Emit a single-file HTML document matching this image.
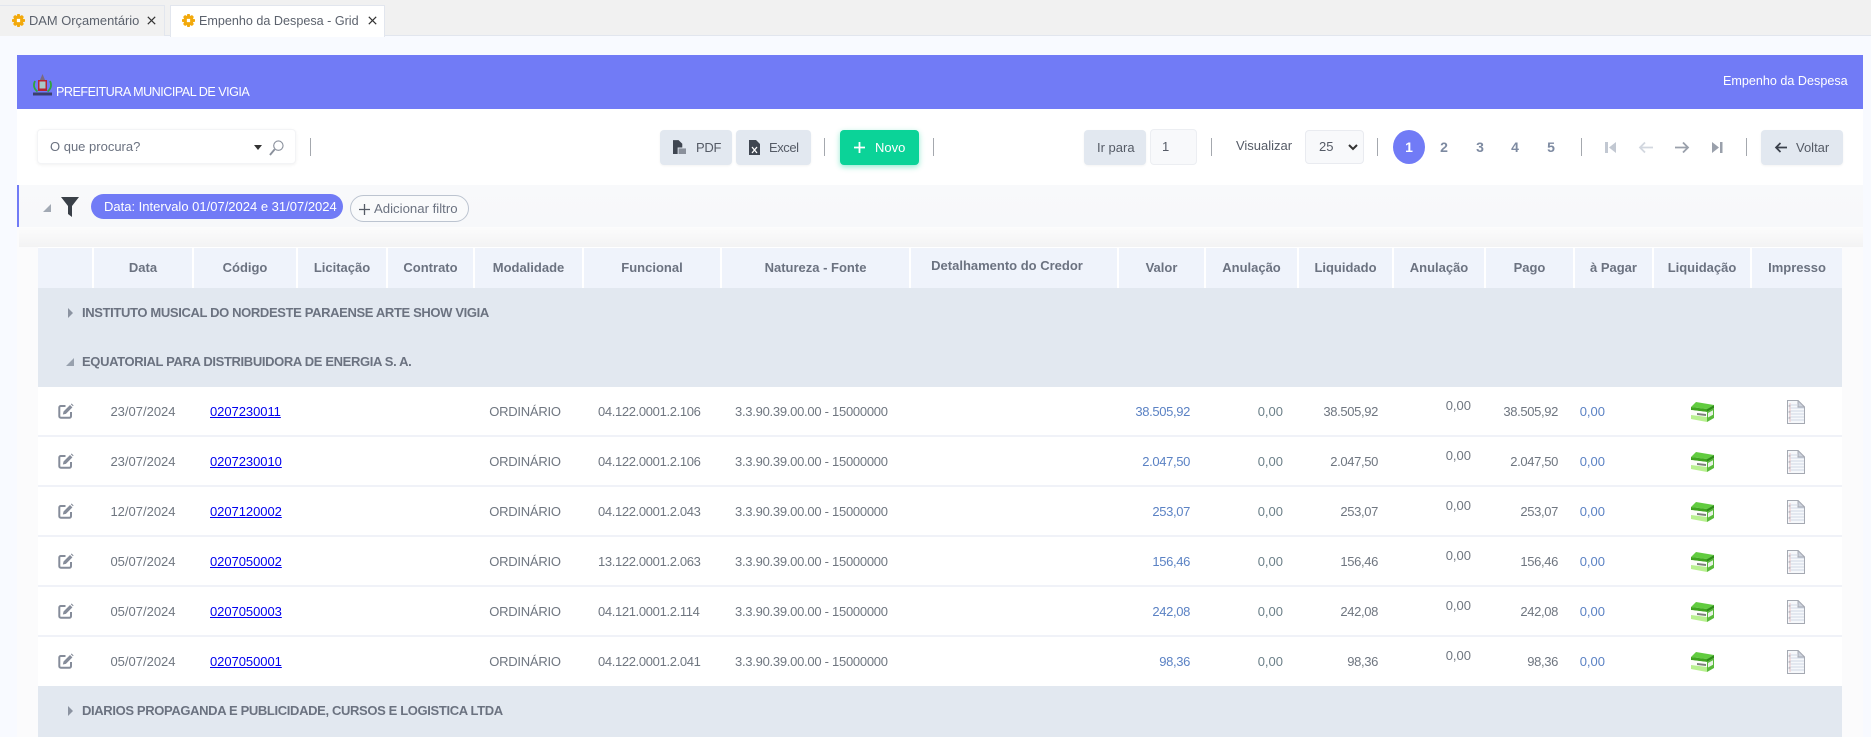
<!DOCTYPE html>
<html lang="pt"><head><meta charset="utf-8"><title>Empenho da Despesa - Grid</title>
<style>
*{box-sizing:border-box}
html,body{margin:0;padding:0;width:1871px;height:737px;overflow:hidden;background:#f8faff;font-family:"Liberation Sans",sans-serif;font-size:13px;color:#6b7280}
.a,.a2{position:absolute;white-space:nowrap}
.tabbar{position:absolute;left:0;top:0;width:1871px;height:36px;background:#f1f1f1;border-bottom:1px solid #e2e6ee}
.tab{position:absolute;top:5px;height:31px;background:#f1f1f1;border:1px solid #e2e6ee;border-bottom:0}
.hdr{position:absolute;left:17px;top:55px;width:1846px;height:54px;background:#717bf6;color:#fff}
.main{position:absolute;left:17px;top:109px;width:1846px;height:628px;background:#fbfbfc}
.tool{position:absolute;left:17px;top:109px;width:1846px;height:76px;background:#fff}
.flt{position:absolute;left:17px;top:185px;width:1846px;height:42px;background:linear-gradient(#f8f9fb,#f7f8fa);border-left:2px solid #717bf6}
.gap{position:absolute;left:19px;top:227px;width:1844px;height:20px;background:linear-gradient(#fcfcfc,#f3f3f4)}
.btn{position:absolute;top:130px;height:35px;background:#e2e8f0;border-radius:4px;line-height:35px;font-size:13px;color:#555b66;box-shadow:0 1px 2px rgba(0,0,0,.05)}
.div{position:absolute;top:138px;width:1px;height:18px;background:#a4a8ae}
.pg{position:absolute;top:137px;width:20px;text-align:center;line-height:20px;font-weight:bold;font-size:14px;color:#7d8aa1}
.th{position:absolute;top:247px;height:41px;background:#eff3fb;border-right:2px solid #fff;border-top:1px solid #fff;text-align:center;line-height:40px;font-weight:bold;font-size:13px;color:#6b7280}
.grp{position:absolute;left:38px;width:1804px;background:#e2e8f0;font-weight:bold;font-size:13px;letter-spacing:-.36px;color:#6b7280}
.grp span{position:absolute;left:44px;top:16px;line-height:18px;white-space:nowrap}
.tri-r{position:absolute;left:30px;top:20px;width:0;height:0;border-left:5px solid #8b93a1;border-top:5px solid transparent;border-bottom:5px solid transparent}
.tri-d{position:absolute;left:28px;top:20px;width:0;height:0;border-right:8px solid #98a1ae;border-top:8px solid transparent}
.row{position:absolute;left:38px;width:1804px;height:50px;background:#fff;border-bottom:2px solid #f0f2f8;font-size:13px;color:#6f7680}
.row span,.row a,.row svg{position:absolute;white-space:nowrap}
.row span,.row a{top:16px;line-height:18px}
.row a{color:#0000ee;text-decoration:underline;left:172px;letter-spacing:-.05px}
.d{left:55px;width:100px;text-align:center}
.m{left:437px;width:100px;text-align:center;letter-spacing:-.25px}
.f{left:560px;letter-spacing:-.35px}.n{left:697px;letter-spacing:-.27px}
.v1,.v2,.v3,.v4,.v5,.v6{text-align:right;width:100px}
.v1{left:1052px;color:#5b82c4;letter-spacing:-.35px}.v2{left:1145px;color:#6b7f88}.v3{left:1240px;letter-spacing:-.35px}.v4{left:1333px;top:10px!important}.v5{left:1420px;letter-spacing:-.35px}.v6{left:1467px;color:#5b82c4}
.e{left:20px;top:16px}.b{left:1652px;top:15px}.p{left:1749px;top:13px}
</style></head><body>
<svg width="0" height="0" style="position:absolute"><defs>
<symbol id="edit" viewBox="0 0 16 16"><path d="M7.500 3H2.800C2 3 1.300 3.700 1.300 4.500v8.800c0 .8.700 1.400 1.500 1.400h8.800c.8 0 1.400-.6 1.400-1.400V9" fill="none" stroke="#858c9a" stroke-width="2"/><path d="M5.500 8.500 12 2l2.400 2.400-6.500 6.500-3 .6zM12.800 1.200l.8-.7 2 2-.7.8z" fill="#858c9a"/></symbol>
<symbol id="box" viewBox="0 0 24 20"><path d="M1 5 6 0l18 3-7 4z" fill="#62cc40"/><path d="M1 5l16 2v3L1 8z" fill="#3fa51f"/><path d="M17 7l7-4v3l-7 4z" fill="#2f8d19"/><path d="M1 8l16 2v10L1 17z" fill="#fbfdf9"/><path d="M1 13l16 2v5L1 17z" fill="#b8f090"/><path d="M17 10l7-4v10l-7 4z" fill="#58b93a"/><path d="M18 11l5-2.800v4.500L18 15.500z" fill="#e8f2e4"/><path d="M7 11l9 1v2l-9-1z" fill="#7c807c"/></symbol>
<symbol id="doc" viewBox="0 0 18 24"><path d="M.5.5H11L17.500 7V23.500H.5z" fill="#f6f8fb" stroke="#a5a9b2"/><path d="M11 .5V7h6.500z" fill="#cdd3de" stroke="#a5a9b2"/><path d="M2 5h9M2 8h15M2 11h15M2 14h15M2 17h15M2 20h15" stroke="#d0d8e6"/><path d="M3 3v19" stroke="#eec9c9"/><path d="M1.500 6h2M1.500 12h2M1.500 18h2" stroke="#a0a4ac"/></symbol>
<symbol id="gear" viewBox="0 0 16 16"><path d="M6.500 0h3l.5 2.400 2.300-1.200 2.300 2.300L13.400 6 16 6.500v3l-2.600.5 1.200 2.500-2.300 2.300L10 13.600 9.500 16h-3L6 13.600l-2.300 1.200-2.300-2.300L2.600 10 0 9.500v-3L2.600 6 1.400 3.500l2.300-2.300L6 2.400z" fill="#f2a90c"/><rect x="6" y="6" width="4" height="4" fill="#fff"/></symbol>
</defs></svg>

<div class="tabbar"></div>
<div class="tab" style="left:-2px;width:167px"></div>
<div class="tab" style="left:170px;width:215px;background:#fff;height:32px"></div>
<svg class="a" style="left:12px;top:14px" width="13" height="13"><use href="#gear"/></svg>
<span class="a" style="left:29px;top:12px;line-height:18px;font-size:12.9px;color:#5c626d">DAM Orçamentário</span>
<svg class="a" style="left:147px;top:16px" width="9" height="9" viewBox="0 0 9 9"><path d="M.8.8l7.400 7.400M8.200.8.800 8.200" stroke="#333" stroke-width="1.200"/></svg>
<svg class="a" style="left:182px;top:14px" width="13" height="13"><use href="#gear"/></svg>
<span class="a" style="left:199px;top:12px;line-height:18px;font-size:12.6px;color:#5c626d">Empenho da Despesa - Grid</span>
<svg class="a" style="left:368px;top:16px" width="9" height="9" viewBox="0 0 9 9"><path d="M.8.8l7.400 7.400M8.200.8.800 8.200" stroke="#333" stroke-width="1.200"/></svg>

<div class="main"></div>
<div class="hdr"></div>
<svg class="a" style="left:33px;top:74px" width="19" height="22" viewBox="0 0 19 22"><path d="M9.500 0l2.500 6h-5z" fill="#7a6a80"/><path d="M2 7C0 11 1 15 4.500 17.500M17 7c2 4 1 8-2.500 10.500" fill="none" stroke="#2fa53c" stroke-width="1.800"/><rect x="5" y="6" width="9" height="11" fill="#b82535"/><rect x="6.500" y="7.500" width="6" height="7" fill="#a9c9c9"/><rect x="0" y="18.500" width="19" height="3" fill="#3a3f6e"/></svg>
<span class="a" style="left:56px;top:83px;line-height:18px;font-size:12.6px;letter-spacing:-.5px;color:#fff">PREFEITURA MUNICIPAL DE VIGIA</span>
<span class="a" style="left:1723px;top:72px;line-height:18px;font-size:12.6px;color:#fff">Empenho da Despesa</span>

<div class="tool"></div>
<div class="a" style="left:37px;top:129px;width:259px;height:35px;background:#fff;border:1px solid #f3f4f6;border-radius:4px;box-shadow:0 1px 3px rgba(0,0,0,.06)"></div>
<span class="a" style="left:50px;top:138px;line-height:18px;font-size:13px;color:#6b7280">O que procura?</span>
<div class="a" style="left:254px;top:145px;width:0;height:0;border-left:4.500px solid transparent;border-right:4.500px solid transparent;border-top:5px solid #333"></div>
<svg class="a" style="left:269px;top:140px" width="15" height="16" viewBox="0 0 16 17"><circle cx="10" cy="6" r="5" fill="none" stroke="#8a909c" stroke-width="1.200"/><path d="M6 10l-5 6" stroke="#8a909c" stroke-width="2"/></svg>
<div class="div" style="left:310px"></div>

<div class="btn" style="left:660px;width:72px"><span class="a" style="left:36px;letter-spacing:-.3px">PDF</span></div>
<svg class="a" style="left:673px;top:140px" width="13" height="15" viewBox="0 0 14 16"><path d="M0 0h6l4 4v4H5v7H0z" fill="#3f4651"/><rect x="6" y="9" width="8" height="6" fill="#8a909b"/></svg>
<div class="btn" style="left:736px;width:75px"><span class="a" style="left:33px;letter-spacing:-.45px">Excel</span></div>
<svg class="a" style="left:749px;top:140px" width="11" height="15" viewBox="0 0 11 15"><path d="M0 0h7l4 4v11H0z" fill="#3f4651"/><path d="M3 7l5 6M8 7l-5 6" stroke="#fff" stroke-width="1.300"/></svg>
<div class="div" style="left:824px"></div>
<div class="btn" style="left:840px;width:79px;background:#0bd398;color:#fff;box-shadow:0 2px 6px rgba(11,211,152,.45)"><span class="a" style="left:35px">Novo</span></div>
<svg class="a" style="left:853px;top:141px" width="13" height="13" viewBox="0 0 13 13"><path d="M6.500 1v11M1 6.500h11" stroke="#fff" stroke-width="1.800"/></svg>
<div class="div" style="left:933px"></div>
<div class="btn" style="left:1084px;width:62px"><span class="a" style="left:13px">Ir para</span></div>
<div class="a" style="left:1150px;top:129px;width:47px;height:36px;background:#f8f9fb;border:1px solid #eceef2;border-radius:4px;line-height:33px;padding-left:11px;color:#555b66">1</div>
<div class="div" style="left:1211px"></div>
<div class="a" style="left:1227px;top:137px;width:74px;height:17px;background:#fff;border-radius:3px;line-height:17px;text-align:center;color:#555b66">Visualizar</div>
<div class="a" style="left:1305px;top:130px;width:59px;height:34px;background:#f8f9fb;border:1px solid #e9ebf0;border-radius:4px;line-height:32px;padding-left:13px;color:#555b66">25</div>
<svg class="a" style="left:1348px;top:144px" width="10" height="7" viewBox="0 0 10 7"><path d="M1 1l4 4 4-4" fill="none" stroke="#333" stroke-width="2"/></svg>
<div class="div" style="left:1377px"></div>
<div class="a" style="left:1393px;top:130px;width:32px;height:34px;border-radius:50%;background:#717bf6;color:#fff;font-weight:bold;font-size:14px;line-height:34px;text-align:center">1</div>
<span class="pg" style="left:1434px">2</span><span class="pg" style="left:1470px">3</span><span class="pg" style="left:1505px">4</span><span class="pg" style="left:1541px">5</span>
<div class="div" style="left:1581px"></div>
<svg class="a" style="left:1605px;top:141px" width="12" height="13" viewBox="0 0 12 13"><path d="M0 1h3v11H0zM11 1v11L4 6.500z" fill="#c2c8d2"/></svg>
<svg class="a" style="left:1638px;top:141px" width="16" height="13" viewBox="0 0 16 13"><path d="M15 6.500H2M7 1.500l-5 5 5 5" fill="none" stroke="#d2d7df" stroke-width="1.800"/></svg>
<svg class="a" style="left:1674px;top:141px" width="16" height="13" viewBox="0 0 16 13"><path d="M1 6.500h13M9 1.500l5 5-5 5" fill="none" stroke="#9aa0ab" stroke-width="1.800"/></svg>
<svg class="a" style="left:1711px;top:141px" width="12" height="13" viewBox="0 0 12 13"><path d="M1 1l7 5.500L1 12zM9 1h2.500v11H9z" fill="#9aa0ab"/></svg>
<div class="div" style="left:1746px"></div>
<div class="btn" style="left:1761px;width:82px"><span class="a" style="left:35px">Voltar</span></div>
<svg class="a" style="left:1774px;top:141px" width="14" height="13" viewBox="0 0 14 13"><path d="M13 6.500H2M6.500 2 2 6.500 6.500 11" fill="none" stroke="#3a404b" stroke-width="1.700"/></svg>

<div class="flt"></div>
<div class="gap"></div>
<div class="a" style="left:43px;top:204px;width:0;height:0;border-right:8px solid #a2a9b4;border-top:8px solid transparent"></div>
<svg class="a" style="left:61px;top:197px" width="18" height="20" viewBox="0 0 18 20"><path d="M0 0h18L11 9v11l-4-3V9z" fill="#3a4048"/></svg>
<div class="a" style="left:91px;top:194px;width:252px;height:25px;background:#717bf6;border-radius:13px;color:#fff;line-height:26px;padding-left:13px;font-size:13px">Data: Intervalo 01/07/2024 e 31/07/2024</div>
<div class="a" style="left:350px;top:195px;width:119px;height:27px;background:#f9fafb;border:1px solid #bcc4d0;border-radius:14px;line-height:25px;padding-left:23px;font-size:13.2px;color:#6b7280">Adicionar filtro</div>
<svg class="a" style="left:359px;top:204px" width="11" height="11" viewBox="0 0 11 11"><path d="M5.500 0v11M0 5.500h11" stroke="#555b66" stroke-width="1.300"/></svg>

<div class="th" style="left:38px;width:56px"></div>
<div class="th" style="left:94px;width:100px">Data</div>
<div class="th" style="left:194px;width:104px">Código</div>
<div class="th" style="left:298px;width:90px">Licitação</div>
<div class="th" style="left:388px;width:87px">Contrato</div>
<div class="th" style="left:475px;width:109px">Modalidade</div>
<div class="th" style="left:584px;width:138px">Funcional</div>
<div class="th" style="left:722px;width:189px">Natureza - Fonte</div>
<div class="th" style="left:911px;width:208px;line-height:36px;padding-right:14px">Detalhamento do Credor</div>
<div class="th" style="left:1119px;width:87px">Valor</div>
<div class="th" style="left:1206px;width:93px">Anulação</div>
<div class="th" style="left:1299px;width:95px">Liquidado</div>
<div class="th" style="left:1394px;width:92px">Anulação</div>
<div class="th" style="left:1486px;width:89px">Pago</div>
<div class="th" style="left:1575px;width:79px">à Pagar</div>
<div class="th" style="left:1654px;width:98px">Liquidação</div>
<div class="th" style="left:1752px;width:90px;border-right:0">Impresso</div>

<div class="grp" style="top:288px;height:50px"><i class="tri-r"></i><span>INSTITUTO MUSICAL DO NORDESTE PARAENSE ARTE SHOW VIGIA</span></div>
<div class="grp" style="top:338px;height:49px"><i class="tri-d"></i><span style="top:15px">EQUATORIAL PARA DISTRIBUIDORA DE ENERGIA S. A.</span></div>

<div class="row" style="top:387px"><svg class="e" width="16" height="16"><use href="#edit"/></svg><span class="d">23/07/2024</span><a href="#">0207230011</a><span class="m">ORDINÁRIO</span><span class="f">04.122.0001.2.106</span><span class="n">3.3.90.39.00.00 - 15000000</span><span class="v1">38.505,92</span><span class="v2">0,00</span><span class="v3">38.505,92</span><span class="v4">0,00</span><span class="v5">38.505,92</span><span class="v6">0,00</span><svg class="b" width="24" height="20"><use href="#box"/></svg><svg class="p" width="18" height="24"><use href="#doc"/></svg></div>
<div class="row" style="top:437px"><svg class="e" width="16" height="16"><use href="#edit"/></svg><span class="d">23/07/2024</span><a href="#">0207230010</a><span class="m">ORDINÁRIO</span><span class="f">04.122.0001.2.106</span><span class="n">3.3.90.39.00.00 - 15000000</span><span class="v1">2.047,50</span><span class="v2">0,00</span><span class="v3">2.047,50</span><span class="v4">0,00</span><span class="v5">2.047,50</span><span class="v6">0,00</span><svg class="b" width="24" height="20"><use href="#box"/></svg><svg class="p" width="18" height="24"><use href="#doc"/></svg></div>
<div class="row" style="top:487px"><svg class="e" width="16" height="16"><use href="#edit"/></svg><span class="d">12/07/2024</span><a href="#">0207120002</a><span class="m">ORDINÁRIO</span><span class="f">04.122.0001.2.043</span><span class="n">3.3.90.39.00.00 - 15000000</span><span class="v1">253,07</span><span class="v2">0,00</span><span class="v3">253,07</span><span class="v4">0,00</span><span class="v5">253,07</span><span class="v6">0,00</span><svg class="b" width="24" height="20"><use href="#box"/></svg><svg class="p" width="18" height="24"><use href="#doc"/></svg></div>
<div class="row" style="top:537px"><svg class="e" width="16" height="16"><use href="#edit"/></svg><span class="d">05/07/2024</span><a href="#">0207050002</a><span class="m">ORDINÁRIO</span><span class="f">13.122.0001.2.063</span><span class="n">3.3.90.39.00.00 - 15000000</span><span class="v1">156,46</span><span class="v2">0,00</span><span class="v3">156,46</span><span class="v4">0,00</span><span class="v5">156,46</span><span class="v6">0,00</span><svg class="b" width="24" height="20"><use href="#box"/></svg><svg class="p" width="18" height="24"><use href="#doc"/></svg></div>
<div class="row" style="top:587px"><svg class="e" width="16" height="16"><use href="#edit"/></svg><span class="d">05/07/2024</span><a href="#">0207050003</a><span class="m">ORDINÁRIO</span><span class="f">04.121.0001.2.114</span><span class="n">3.3.90.39.00.00 - 15000000</span><span class="v1">242,08</span><span class="v2">0,00</span><span class="v3">242,08</span><span class="v4">0,00</span><span class="v5">242,08</span><span class="v6">0,00</span><svg class="b" width="24" height="20"><use href="#box"/></svg><svg class="p" width="18" height="24"><use href="#doc"/></svg></div>
<div class="row" style="top:637px;height:49px;border-bottom:0"><svg class="e" width="16" height="16"><use href="#edit"/></svg><span class="d">05/07/2024</span><a href="#">0207050001</a><span class="m">ORDINÁRIO</span><span class="f">04.122.0001.2.041</span><span class="n">3.3.90.39.00.00 - 15000000</span><span class="v1">98,36</span><span class="v2">0,00</span><span class="v3">98,36</span><span class="v4">0,00</span><span class="v5">98,36</span><span class="v6">0,00</span><svg class="b" width="24" height="20"><use href="#box"/></svg><svg class="p" width="18" height="24"><use href="#doc"/></svg></div>

<div class="grp" style="top:686px;height:51px"><i class="tri-r"></i><span>DIARIOS PROPAGANDA E PUBLICIDADE, CURSOS E LOGISTICA LTDA</span></div>
</body></html>
